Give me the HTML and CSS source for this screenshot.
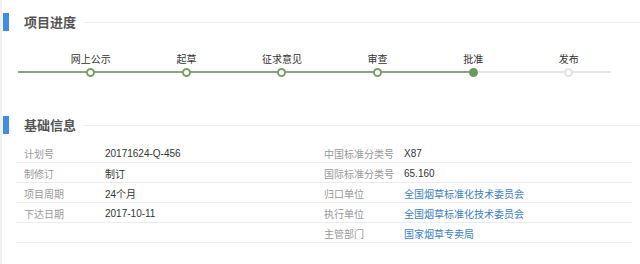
FILE: index.html
```html
<!DOCTYPE html>
<html lang="zh-CN">
<head>
    <meta charset="UTF-8">
    <meta name="viewport" content="width=device-width, initial-scale=1.0">
    <title>项目信息</title>
    <link rel="stylesheet" href="styles.css">
</head>
<body>
    <div class="page">
        <div class="block-head head-progress">
            <span class="mark"></span>
            <h2>项目进度</h2>
            <span class="rule"></span>
        </div>

        <div class="steps">
            <div class="track"></div>
            <div class="step done"><span class="step-name">网上公示</span><span class="dot"></span></div>
            <div class="step done"><span class="step-name">起草</span><span class="dot"></span></div>
            <div class="step done"><span class="step-name">征求意见</span><span class="dot"></span></div>
            <div class="step done"><span class="step-name">审查</span><span class="dot"></span></div>
            <div class="step current"><span class="step-name">批准</span><span class="dot"></span></div>
            <div class="step"><span class="step-name">发布</span><span class="dot"></span></div>
        </div>

        <div class="block-head head-info">
            <span class="mark"></span>
            <h2>基础信息</h2>
            <span class="rule"></span>
        </div>

        <table class="info">
            <colgroup>
                <col class="c-label1">
                <col class="c-value1">
                <col class="c-label2">
                <col>
            </colgroup>
            <tr>
                <td class="label">计划号</td><td class="value">20171624-Q-456</td>
                <td class="label">中国标准分类号</td><td class="value">X87</td>
            </tr>
            <tr>
                <td class="label">制修订</td><td class="value">制订</td>
                <td class="label">国际标准分类号</td><td class="value">65.160</td>
            </tr>
            <tr>
                <td class="label">项目周期</td><td class="value">24个月</td>
                <td class="label">归口单位</td><td class="value"><a href="#">全国烟草标准化技术委员会</a></td>
            </tr>
            <tr>
                <td class="label">下达日期</td><td class="value">2017-10-11</td>
                <td class="label">执行单位</td><td class="value"><a href="#">全国烟草标准化技术委员会</a></td>
            </tr>
            <tr>
                <td class="label"></td><td class="value"></td>
                <td class="label">主管部门</td><td class="value"><a href="#">国家烟草专卖局</a></td>
            </tr>
        </table>
    </div>
</body>
</html>
```

FILE: styles.css
```css
html, body {
    margin: 0;
    background: #fff;
}
body {
    font-family: "Liberation Sans", Arial, "Noto Sans CJK SC", sans-serif;
    font-size: 10px;
    color: #333;
}
.page {
    width: 640px;
    height: 264px;
    box-sizing: border-box;
    border-left: 2px solid #f0f0f0;
    overflow: hidden;
}

/* section headers */
.block-head {
    display: flex;
    align-items: center;
    height: 18px;
}
.head-progress {
    margin-top: 13px;
}
.head-info {
    margin-top: 39px;
}
.mark {
    width: 6px;
    height: 18px;
    margin-left: 1px;
    background-color: #3d8ee8;
}
.block-head h2 {
    margin: 0 8px 0 15px;
    font-family: "Noto Sans CJK SC", sans-serif;
    font-size: 13px;
    font-weight: bold;
    line-height: 18px;
    color: #555;
}
.rule {
    flex: 1;
    height: 1px;
    background-color: #eee;
}

/* progress steps */
.steps {
    position: relative;
    display: flex;
    margin: 21px 0 0 41px;
}
.track {
    position: absolute;
    left: -25px;
    bottom: 4px;
    width: 593px;
    height: 2px;
    background: linear-gradient(to right, #86a87a 456px, #e6e6e6 456px);
}
.step {
    position: relative;
    width: 95.6px;
    display: flex;
    flex-direction: column;
    align-items: center;
}
.step-name {
    font-family: "Noto Sans CJK SC", sans-serif;
    font-size: 10px;
    line-height: 14px;
    margin-bottom: 2px;
    color: #333;
}
.dot {
    width: 9px;
    height: 9px;
    box-sizing: border-box;
    border-radius: 50%;
    border: 2px solid #e3e3e3;
    background: #fff;
}
.step.done .dot {
    border-color: #7a9e6c;
}
.step.current .dot {
    border-color: #6a9a5c;
    background: #6a9a5c;
}

/* info table */
.info {
    width: 616px;
    margin: 9px 0 0 14px;
    border-collapse: collapse;
    table-layout: fixed;
}
.c-label1 {
    width: 81px;
}
.c-value1 {
    width: 219px;
}
.c-label2 {
    width: 80px;
}
.info td {
    height: 18px;
    padding: 1px 8px 0;
    border-bottom: 1px solid #ececec;
    white-space: nowrap;
}
.info .label {
    font-family: "Noto Sans CJK SC", sans-serif;
    color: #999;
}
.info .value {
    color: #333;
}
.info a {
    font-family: "Noto Sans CJK SC", sans-serif;
    color: #3c7fc4;
    text-decoration: none;
}
```
